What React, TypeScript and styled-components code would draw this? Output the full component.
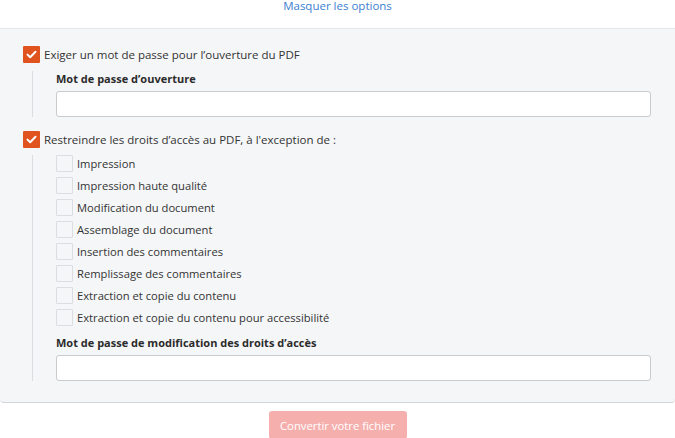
import React from "react";
import styled, { createGlobalStyle } from "styled-components";

const Global = createGlobalStyle`
  html, body { margin: 0; padding: 0; background: #ffffff; }
  body { font-family: "Open Sans", "Noto Sans", sans-serif; color: #333; overflow: hidden; }
`;

const Page = styled.div`
  width: 675px;
  display: flex;
  flex-direction: column;
  align-items: stretch;
  & > * { flex-shrink: 0; }
`;

const TopBar = styled.div`
  height: 28px;
  display: flex;
  justify-content: center;
  align-items: flex-start;
`;

const ToggleLink = styled.a`
  font-size: 11.5px;
  line-height: 11px;
  color: #3b7fd1;
  cursor: pointer;
`;

const Panel = styled.div`
  background: #f5f6f8;
  border-top: 1px solid #e3e5e8;
  border-bottom: 1px solid #d3d5d8;
  border-radius: 0 0 4px 4px;
  padding: 17px 24px 21px 23px;
  display: flex;
  flex-direction: column;
`;

const MainRow = styled.label`
  display: flex;
  align-items: center;
  gap: 4px;
  font-size: 11.5px;
  line-height: 17px;
  color: #333;
`;

const OrangeBox = styled.span`
  width: 17px;
  height: 17px;
  background: #e0531f;
  border-radius: 1px;
  display: flex;
  align-items: center;
  justify-content: center;
  flex-shrink: 0;
`;

const Section = styled.div<{ $top: number; $bottom: number }>`
  margin: ${(p) => p.$top}px 0 ${(p) => p.$bottom}px 9px;
  border-left: 1px solid #dcdde0;
  padding-left: 23px;
  display: flex;
  flex-direction: column;
`;

const FieldLabel = styled.div<{ $mt?: number }>`
  font-size: 11px;
  font-weight: 700;
  color: #2b2b2b;
  line-height: 16px;
  margin-top: ${(p) => p.$mt ?? 0}px;
  margin-bottom: 4px;
`;

const TextInput = styled.input`
  box-sizing: border-box;
  width: 595px;
  height: 26px;
  border: 1px solid #c9cbce;
  border-radius: 3px;
  background: #fff;
  outline: none;
`;

const OptionList = styled.div`
  display: flex;
  flex-direction: column;
  gap: 5px;
`;

const OptionRow = styled.label`
  display: flex;
  align-items: center;
  gap: 4px;
  font-size: 11.2px;
  line-height: 17px;
  color: #333;
`;

const EmptyBox = styled.span`
  box-sizing: border-box;
  width: 17px;
  height: 17px;
  border: 1px solid #dcdde0;
  border-radius: 1px;
  background: #f5f6f8;
  flex-shrink: 0;
`;

const Footer = styled.div`
  display: flex;
  justify-content: center;
  padding-top: 8px;
`;

const ConvertButton = styled.button`
  width: 138px;
  height: 28px;
  border: none;
  border-radius: 3px;
  background: #f5b0ae;
  color: #fff;
  font-family: "Open Sans", "Noto Sans", sans-serif;
  font-size: 11.3px;
  padding: 0;
`;

const Check = () => (
  <svg width="11" height="9" viewBox="0 0 11 9">
    <path d="M1.5 4.6 L4.2 7.2 L9.5 1.8" stroke="#fff" strokeWidth="2" fill="none" strokeLinecap="round" strokeLinejoin="round" />
  </svg>
);

const options = [
  "Impression",
  "Impression haute qualité",
  "Modification du document",
  "Assemblage du document",
  "Insertion des commentaires",
  "Remplissage des commentaires",
  "Extraction et copie du contenu",
  "Extraction et copie du contenu pour accessibilité",
];

export default function App() {
  return (
    <Page>
      <Global />
      <TopBar>
        <ToggleLink>Masquer les options</ToggleLink>
      </TopBar>
      <Panel>
        <MainRow>
          <OrangeBox><Check /></OrangeBox>
          Exiger un mot de passe pour l’ouverture du PDF
        </MainRow>
        <Section $top={8} $bottom={14}>
          <FieldLabel $mt={0}>Mot de passe d’ouverture</FieldLabel>
          <TextInput />
        </Section>
        <MainRow>
          <OrangeBox><Check /></OrangeBox>
          Restreindre les droits d’accès au PDF, à l'exception de :
        </MainRow>
        <Section $top={7} $bottom={0}>
          <OptionList>
            {options.map((o) => (
              <OptionRow key={o}>
                <EmptyBox />
                {o}
              </OptionRow>
            ))}
          </OptionList>
          <FieldLabel $mt={9}>Mot de passe de modification des droits d’accès</FieldLabel>
          <TextInput />
        </Section>
      </Panel>
      <Footer>
        <ConvertButton>Convertir votre fichier</ConvertButton>
      </Footer>
    </Page>
  );
}
